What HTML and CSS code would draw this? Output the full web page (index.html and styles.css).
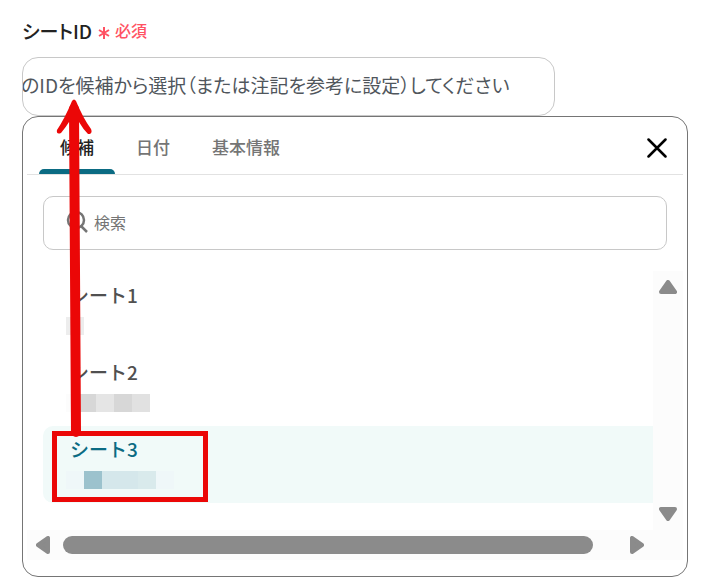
FILE: index.html
```html
<!DOCTYPE html>
<html lang="ja">
<head>
    <meta charset="UTF-8">
    <meta name="viewport" content="width=device-width, initial-scale=1.0">
    <title>シートID</title>
    <link rel="stylesheet" href="styles.css">
</head>
<body>
    <div class="field">
        <label class="field-label" for="sheet-id">
            <span class="field-name">シートID</span>
            <svg class="asterisk" viewBox="0 0 12 14" aria-hidden="true"><path d="M6 1v12M1 4l10 6M11 4L1 10"/></svg>
            <span class="required">必須</span>
        </label>
        <input class="field-input" id="sheet-id" type="text" value="のIDを候補から選択（または注記を参考に設定）してください">
    </div>

    <div class="panel">
        <div class="panel-header">
            <div class="tabs">
                <button class="tab active" type="button">候補</button>
                <button class="tab" type="button">日付</button>
                <button class="tab" type="button">基本情報</button>
            </div>
            <button class="close" type="button" aria-label="閉じる">
                <svg viewBox="0 0 20 20"><path d="M1.500 1.500L18.500 18.500M18.500 1.500L1.500 18.500"/></svg>
            </button>
        </div>

        <div class="search">
            <svg class="search-icon" viewBox="0 0 24 24" aria-hidden="true"><circle cx="10" cy="10" r="8"/><path d="M15 16l6 6"/></svg>
            <input class="search-input" type="text" placeholder="検索" aria-label="検索">
        </div>

        <div class="viewport">
            <div class="list">
                <button class="item" type="button">
                    <span class="item-name">シート1</span>
                    <span class="mask"><i class="g1"></i></span>
                </button>
                <button class="item" type="button">
                    <span class="item-name">シート2</span>
                    <span class="mask"><i class="g0"></i><i class="g2"></i><i class="g3"></i><i class="g2"></i><i class="g4"></i></span>
                </button>
                <button class="item selected" type="button">
                    <span class="item-name">シート3</span>
                    <span class="mask"><i class="b1"></i><i class="b2"></i><i class="b3"></i><i class="b3"></i><i class="b4"></i><i class="b1"></i></span>
                    <span class="highlight"></span>
                </button>
            </div>
            <div class="scroll-y">
                <svg class="arrow" viewBox="0 0 18 14"><path d="M9 2L16 12H2z"/></svg>
                <svg class="arrow" viewBox="0 0 18 14"><path d="M9 12L2 2h14z"/></svg>
            </div>
            <div class="scroll-x">
                <svg class="arrow-side" viewBox="0 0 14 18"><path d="M2 9L12 2v14z"/></svg>
                <span class="thumb"></span>
                <svg class="arrow-side" viewBox="0 0 14 18"><path d="M12 9L2 2v14z"/></svg>
            </div>
        </div>
    </div>

    <!-- pointer from the selected sheet up to the input -->
    <svg class="pointer" viewBox="0 0 40 340" aria-hidden="true">
        <path class="shaft" d="M19 10L21 333"/>
        <path class="head" d="M17 2Q19 -1 21 2Q28 19 36 30Q38 35 33 35Q28 30 24 23H14Q11 28 6 34Q1 36 2 31Q10 19 17 2z"/>
    </svg>
</body>
</html>
```
FILE: styles.css
```css
* {
    box-sizing: border-box;
}

body {
    position: relative;
    margin: 0;
    padding: 16px 33px 0 22px;
    background: #fff;
    color: #222;
    font-family: "Noto Sans CJK JP", sans-serif;
}

button {
    padding: 0;
    border: 0;
    background: none;
    font: inherit;
    text-align: left;
    cursor: pointer;
}

input {
    font: inherit;
    outline: 0;
}

.field-label {
    display: flex;
    align-items: center;
    height: 28px;
    margin-bottom: 13px;
}

.field-name {
    font-size: 19px;
    font-weight: 500;
    font-feature-settings: "palt";
}

.asterisk {
    width: 12px;
    height: 14px;
    margin: 6px 5px 0 6px;
    stroke: #ff5263;
    stroke-width: 2;
}

.required {
    color: #ff5263;
    font-size: 16px;
    font-weight: 500;
}

.field-input {
    display: block;
    width: 80%;
    height: 59px;
    padding: 0 40px 4px 0;
    border: 1px solid #c8c8c8;
    border-radius: 16px;
    color: #50565c;
    font-size: 19px;
    font-feature-settings: "palt";
    text-indent: -2px;
}

.panel {
    padding: 0 4px 16px;
    border: 1px solid #757575;
    border-radius: 16px;
    background: #fff;
}

.panel-header {
    display: flex;
    justify-content: space-between;
    height: 58px;
    padding: 0 16px 0 12px;
    border-bottom: 1px solid #e2e2e2;
}

.tabs {
    display: flex;
}

.tab {
    position: relative;
    padding: 1px 21px 0;
    color: #757575;
    font-size: 17px;
    font-weight: 500;
}

.tab.active {
    color: #222;
}

.tab.active::after {
    content: "";
    position: absolute;
    left: 0;
    right: 0;
    bottom: 0;
    height: 5px;
    border-radius: 5px 5px 0 0;
    background: #0b6b83;
}

.close {
    display: flex;
    align-items: center;
    padding-top: 5px;
}

.close svg {
    width: 20px;
    height: 20px;
    stroke: #000;
    stroke-width: 2.500;
    stroke-linecap: round;
}

.search {
    display: flex;
    align-items: center;
    height: 54px;
    margin: 21px 16px;
    padding: 0 22px 2px;
    border: 1px solid #c8c8c8;
    border-radius: 10px;
}

.search-icon {
    width: 24px;
    height: 24px;
    fill: none;
    stroke: #757575;
    stroke-width: 2.500;
}

.search-input {
    flex: 1;
    min-width: 0;
    margin-left: 4px;
    padding: 0;
    border: 0;
    background: none;
    font-size: 16px;
}

.search-input::placeholder {
    color: #757575;
}

.viewport {
    display: grid;
    grid-template-columns: 1fr 30px;
    grid-template-rows: 259px 30px;
}

.list {
    padding: 1px 0 0 16px;
}

.item {
    position: relative;
    display: flex;
    flex-direction: column;
    justify-content: flex-start;
    width: 100%;
    height: 77px;
    padding: 9px 0 0 27px;
    border-radius: 10px 0 0 10px;
    color: #505050;
}

.item.selected {
    background: #f1faf9;
    color: #0b6b83;
}

.item-name {
    font-size: 19px;
    font-weight: 500;
    line-height: 28px;
}

.mask {
    display: flex;
    height: 18px;
    margin: 8px 0 0 -4px;
}

.mask i {
    width: 18px;
}

.mask .g0 {
    width: 12px;
    background: #fcfcfc;
}

.g1 { background: #ededed; }
.g2 { background: #d7d7d7; }
.g3 { background: #e5e5e5; }
.g4 { background: #e1e1e1; }
.b1 { background: #eff7f9; }
.b2 { background: #9cc2cd; }
.b3 { background: #d5e7eb; }
.b4 { background: #d9eaec; }

.highlight {
    position: absolute;
    top: 5px;
    left: 9px;
    width: 156px;
    height: 71px;
    border: 5px solid #eb0707;
}

.scroll-y {
    display: flex;
    flex-direction: column;
    align-items: center;
    justify-content: space-between;
    padding: 9px 0;
    background: #fcfcfc;
}

.scroll-x {
    grid-column: 1 / 3;
    display: flex;
    align-items: center;
    padding: 0 39px 0 9px;
    background: #fcfcfc;
}

.arrow {
    width: 18px;
    height: 14px;
}

.arrow-side {
    width: 14px;
    height: 18px;
}

.arrow,
.arrow-side {
    fill: #8b8b8b;
    stroke: #8b8b8b;
    stroke-width: 4;
    stroke-linejoin: round;
}

.thumb {
    flex: 1;
    height: 18px;
    margin: 0 37px 0 13px;
    border-radius: 9px;
    background: #8b8b8b;
}

.pointer {
    position: absolute;
    top: 99px;
    left: 55px;
    width: 40px;
    height: 340px;
}

.shaft {
    stroke: #eb0707;
    stroke-width: 10;
    stroke-linecap: round;
}

.head {
    fill: #eb0707;
}
```
